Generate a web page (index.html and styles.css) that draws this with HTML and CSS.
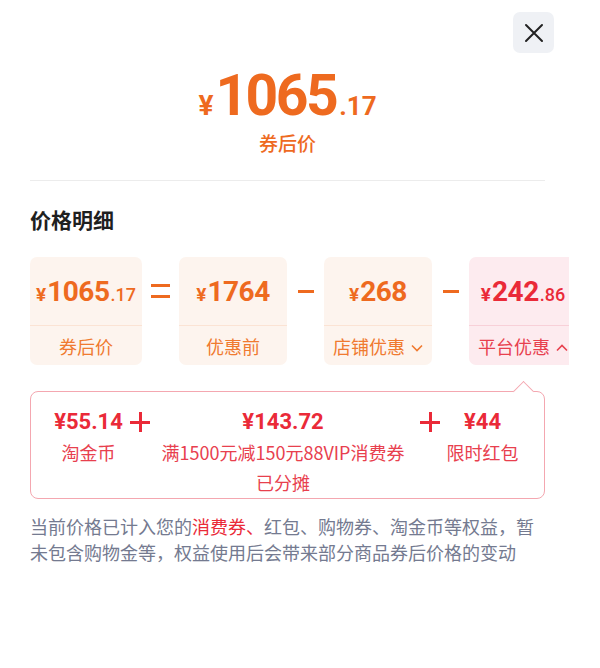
FILE: index.html
```html
<!DOCTYPE html>
<html lang="zh-CN">

<head>
    <meta charset="UTF-8">
    <meta name="viewport" content="width=device-width, initial-scale=1.0">
    <title>价格明细</title>
    <link rel="stylesheet" href="styles.css">
</head>

<body>
    <div class="sheet">
        <button class="close" aria-label="关闭">
            <svg width="20" height="20" viewBox="0 0 20 20">
                <path d="M2 2 L18 18 M18 2 L2 18" stroke="#222" stroke-width="2" stroke-linecap="round" fill="none" />
            </svg>
        </button>

        <div class="hero">
            <div class="hero-price"><span class="cur">¥</span><span class="int">1065</span><span class="dec">.17</span></div>
            <div class="hero-label">券后价</div>
        </div>

        <div class="rule"></div>

        <h2 class="title">价格明细</h2>

        <div class="cards">
            <div class="card card-a">
                <div class="card-price"><span class="cur">¥</span><span class="int">1065</span><span class="dec">.17</span></div>
                <div class="card-label">券后价</div>
            </div>
            <div class="op"><span class="eq"></span></div>
            <div class="card card-b">
                <div class="card-price"><span class="cur">¥</span><span class="int">1764</span></div>
                <div class="card-label">优惠前</div>
            </div>
            <div class="op"><span class="minus"></span></div>
            <div class="card card-c">
                <div class="card-price"><span class="cur">¥</span><span class="int">268</span></div>
                <div class="card-label">店铺优惠
                    <svg class="chev" width="12" height="8" viewBox="0 0 12 8">
                        <path d="M1 1.5 L6 6.5 L11 1.5" stroke="currentColor" stroke-width="1.6" fill="none" />
                    </svg>
                </div>
            </div>
            <div class="op"><span class="minus"></span></div>
            <div class="card card-d">
                <div class="card-price"><span class="cur">¥</span><span class="int">242</span><span class="dec">.86</span></div>
                <div class="card-label">平台优惠
                    <svg class="chev" width="12" height="8" viewBox="0 0 12 8">
                        <path d="M1 6.5 L6 1.5 L11 6.5" stroke="currentColor" stroke-width="1.6" fill="none" />
                    </svg>
                </div>
            </div>
        </div>

        <div class="breakdown">
            <span class="notch"></span>
            <div class="item item-1">
                <div class="item-value">¥55.14</div>
                <div class="item-label">淘金币</div>
            </div>
            <div class="plus"></div>
            <div class="item item-2">
                <div class="item-value">¥143.72</div>
                <div class="item-label">满1500元减150元88VIP消费券<br>已分摊</div>
            </div>
            <div class="plus"></div>
            <div class="item item-3">
                <div class="item-value">¥44</div>
                <div class="item-label">限时红包</div>
            </div>
        </div>

        <p class="note">当前价格已计入您的<span class="hl">消费券、</span>红包、购物券、淘金币等权益，暂未包含购物金等，权益使用后会带来部分商品券后价格的变动</p>
    </div>
</body>

</html>
```

FILE: styles.css
```css
body {
    margin: 0;
    background-color: #fff;
    font-family: "Noto Sans CJK SC", sans-serif;
}

.sheet {
    position: relative;
    width: 515px;
    padding: 0 55px 0 30px;
    overflow: hidden;
    height: 668px;
}

.close {
    position: absolute;
    top: 12px;
    left: 513px;
    width: 41px;
    height: 41px;
    border: none;
    border-radius: 7px;
    background-color: #eff1f5;
    display: flex;
    align-items: center;
    justify-content: center;
    padding: 0;
}

/* top price */
.hero {
    padding-top: 64px;
    text-align: center;
    color: #ee6a1f;
}

.hero-price {
    height: 64px;
    line-height: 64px;
    font-family: Roboto, sans-serif;
    font-weight: 700;
}

.hero-price .cur {
    font-size: 28px;
    margin-right: 2px;
}

.hero-price .int {
    font-size: 57px;
    letter-spacing: -2.5px;
}

.hero-price .dec {
    font-size: 26px;
    margin-left: 3px;
}

.hero-label {
    margin-top: 2px;
    font-size: 19px;
    line-height: 26px;
    font-weight: 500;
}

.rule {
    margin-top: 24px;
    height: 1px;
    background-color: #ececec;
}

.title {
    margin: 23px 0 0;
    font-size: 21px;
    line-height: 30px;
    font-weight: 700;
    color: #1f1f1f;
}

/* cards row */
.cards {
    margin-top: 23px;
    margin-right: -24px;
    display: flex;
    overflow: hidden;
}

.card {
    flex: none;
    border-radius: 7px;
    background-color: #fdf4ee;
    color: #ee6a1f;
    text-align: center;
}

.card-a {
    width: 112px;
}

.card-b,
.card-c {
    width: 108px;
}

.card-d {
    width: 108px;
    background-color: #fdebef;
    color: #ea2a38;
}

.card-price {
    height: 68px;
    line-height: 70px;
    border-bottom: 1px solid #fbe3d4;
    font-family: Roboto, sans-serif;
    font-weight: 700;
    white-space: nowrap;
}

.card-d .card-price {
    border-bottom-color: #f8d0d8;
}

.card-price .cur {
    font-size: 19px;
    margin-right: 1px;
}

.card-price .int {
    font-size: 28px;
    letter-spacing: -0.5px;
}

.card-price .dec {
    font-size: 18px;
    font-weight: 500;
    margin-left: 1px;
}

.card-label {
    height: 39px;
    line-height: 41px;
    font-size: 18px;
    white-space: nowrap;
    color: #f07a30;
}

.card-d .card-label {
    color: #e8404e;
}

.chev {
    margin-left: 2px;
    vertical-align: 2px;
}

.op {
    flex: none;
    width: 37px;
    height: 68px;
    display: flex;
    align-items: center;
    justify-content: center;
}

.eq {
    width: 19px;
    height: 8px;
    border-top: 3px solid #ee6a1f;
    border-bottom: 3px solid #ee6a1f;
}

.minus {
    width: 16px;
    height: 3px;
    background-color: #ee6a1f;
}

/* breakdown box */
.breakdown {
    position: relative;
    margin-top: 26px;
    height: 91px;
    padding: 15px 0 0;
    border: 1px solid #f4a7b0;
    border-radius: 8px;
    display: flex;
    align-items: flex-start;
    text-align: center;
    color: #ea2a38;
}

.notch {
    position: absolute;
    top: -8px;
    left: 485px;
    width: 14px;
    height: 14px;
    background-color: #fff;
    border-top: 1px solid #f4a7b0;
    border-left: 1px solid #f4a7b0;
    transform: rotate(45deg);
}

.item-value {
    line-height: 30px;
    font-family: Roboto, sans-serif;
    font-size: 22px;
    font-weight: 700;
}

.item-label {
    line-height: 30px;
    font-size: 18px;
    color: #e8404e;
}

.item-1 {
    width: 115px;
}

.item-2 {
    width: 266px;
}

.item-3 {
    width: 85px;
}

.plus {
    position: relative;
    flex: none;
    width: 20px;
    height: 30px;
    margin-left: -16px;
}

.item-2 + .plus {
    margin-left: 4px;
}

.plus::before,
.plus::after {
    content: "";
    position: absolute;
    background-color: #ea2a38;
}

.plus::before {
    left: 0;
    top: 14px;
    width: 20px;
    height: 3px;
}

.plus::after {
    left: 8.5px;
    top: 5px;
    width: 3px;
    height: 20px;
}

.note {
    margin: 14px 0 0;
    font-size: 18px;
    line-height: 26px;
    color: #747a90;
}

.hl {
    color: #ea2a38;
}
```
